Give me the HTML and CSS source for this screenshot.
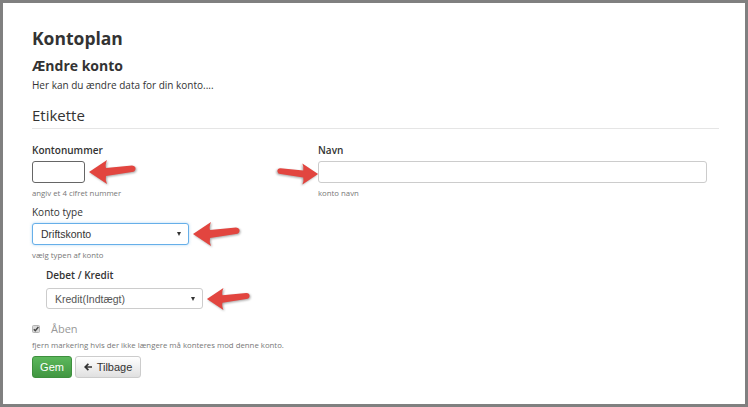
FILE: index.html
```html
<!DOCTYPE html>
<html lang="da">
<head>
<meta charset="utf-8">
<title>Kontoplan</title>
<link rel="stylesheet" href="styles.css">
</head>
<body>
<div class="frame">
  <div class="content">
    <h1 class="title">Kontoplan</h1>
    <h2 class="subtitle">Ændre konto</h2>
    <p class="lead">Her kan du ændre data for din konto....</p>
    <div class="legend">Etikette</div>

    <div class="row">
      <div class="col">
        <div class="label bold">Kontonummer</div>
        <div class="ctl">
          <input class="input input-num" type="text">
          <svg class="arrow arrow-after" viewBox="0 0 48 28" width="48" height="28"><path d="M1 14 L19 2 Q17 7 18 10 L44 7.5 Q48 8 47.5 11 Q47 14 44 14 L18 18 Q17 22 19 26 Z"/></svg>
        </div>
        <div class="help">angiv et 4 cifret nummer</div>

        <div class="label regular">Konto type</div>
        <div class="ctl">
          <div class="select focus"><span>Driftskonto</span><span class="caret"></span></div>
          <svg class="arrow arrow-after" viewBox="0 0 48 28" width="48" height="28"><path d="M1 14 L19 2 Q17 7 18 10 L44 7.5 Q48 8 47.5 11 Q47 14 44 14 L18 18 Q17 22 19 26 Z"/></svg>
        </div>
        <div class="help">vælg typen af konto</div>

        <div class="sub">
          <div class="label bold">Debet / Kredit</div>
          <div class="ctl">
            <div class="select select-sm"><span>Kredit(Indtægt)</span><span class="caret"></span></div>
            <svg class="arrow arrow-after arrow-short" viewBox="0 0 48 28" width="44" height="28"><path d="M1 14 L19 2 Q17 7 18 10 L44 7.5 Q48 8 47.5 11 Q47 14 44 14 L18 18 Q17 22 19 26 Z"/></svg>
          </div>
        </div>
      </div>

      <div class="col">
        <div class="label bold">Navn</div>
        <div class="ctl">
          <svg class="arrow arrow-before" viewBox="0 0 48 28" width="42" height="28"><path d="M1 14 L19 2 Q17 7 18 10 L44 7.5 Q48 8 47.5 11 Q47 14 44 14 L18 18 Q17 22 19 26 Z"/></svg>
          <input class="input input-wide" type="text">
        </div>
        <div class="help">konto navn</div>
      </div>
    </div>

    <div class="check">
      <svg class="checkbox" viewBox="0 0 8 8" width="8" height="8"><rect x="0.5" y="0.5" width="7" height="7" rx="1" fill="#d9d9d9" stroke="#b3b3b3"/><path d="M1.8 4.2 L3.3 5.8 L6.4 2" fill="none" stroke="#444" stroke-width="1.4"/></svg>
      <span class="check-text">Åben</span>
    </div>
    <div class="help help-tight">fjern markering hvis der ikke længere må konteres mod denne konto.</div>

    <div class="buttons">
      <button class="btn btn-success" type="button">Gem</button>
      <button class="btn btn-default" type="button"><svg class="btn-icon" viewBox="0 0 8 8" width="8" height="8"><path d="M0 4 L3.8 0.2 L5 1.4 L3.2 3.2 H8 V4.8 H3.2 L5 6.6 L3.8 7.8 Z"/></svg>Tilbage</button>
    </div>
  </div>
</div>
</body>
</html>
```

FILE: styles.css
```css
* { box-sizing: border-box; }

html, body {
  margin: 0;
  padding: 0;
  background: #808080;
}

.frame {
  width: 748px;
  height: 407px;
  border: 3px solid #808080;
  background: #fff;
  font-family: "Open Sans", "Liberation Sans", sans-serif;
  color: #333;
}

.content {
  margin-left: 29px;
  width: 687px;
  padding-top: 24px;
}

.title {
  margin: 0;
  font-size: 17.5px;
  line-height: 22px;
  font-weight: 700;
}

.subtitle {
  margin: 8px 0 0;
  font-size: 14px;
  line-height: 18px;
  font-weight: 700;
}

.lead {
  margin: 3px 0 0;
  font-size: 10px;
  line-height: 14px;
}

.legend {
  margin-top: 13px;
  font-size: 15px;
  line-height: 20px;
  padding-bottom: 3px;
  border-bottom: 1px solid #e5e5e5;
}

.row {
  margin-top: 14px;
  display: grid;
  grid-template-columns: 286px 389px;
}

.label {
  font-size: 10px;
  line-height: 14px;
}
.label.bold { font-weight: 600; }
.label.regular { font-size: 10px; margin-top: 7px; }

.ctl {
  position: relative;
  width: fit-content;
  margin-top: 4px;
}

.input {
  display: block;
  height: 22px;
  margin: 0;
  padding: 0 6px;
  border: 1px solid #ccc;
  border-radius: 3px;
  background: #fff;
  font-family: "Liberation Sans", Arial, sans-serif;
  font-size: 11px;
  outline: none;
}
.input-num {
  width: 53px;
  border-color: #666;
}
.input-wide {
  width: 389px;
}

.help {
  margin-top: 5px;
  font-size: 7.8px;
  line-height: 10px;
  color: #777;
}

.select {
  width: 157px;
  height: 22px;
  padding: 0 7px 0 8px;
  border: 1px solid #ccc;
  border-radius: 3px;
  background: #fff;
  display: flex;
  align-items: center;
  justify-content: space-between;
  font-family: "Liberation Sans", Arial, sans-serif;
  font-size: 10.5px;
  color: #555;
}
.select.focus {
  border-color: #66afe9;
  box-shadow: 0 0 3px rgba(102, 175, 233, 0.5);
  color: #333;
}
.select-sm { height: 21px; }

.caret {
  width: 0;
  height: 0;
  border-left: 2.5px solid transparent;
  border-right: 2.5px solid transparent;
  border-top: 4px solid #333;
}

.sub {
  padding-left: 14px;
}
.sub .label { margin-top: 8px; }
.sub .ctl { margin-top: 6px; }

.arrow {
  position: absolute;
  top: -3px;
  fill: #e2453f;
  filter: drop-shadow(1px 1px 1px rgba(0, 0, 0, 0.35));
}
.arrow-after {
  left: calc(100% + 3px);
}
.arrow-before {
  right: calc(100% - 1px);
  top: -1px;
  transform: scaleX(-1);
}

.check {
  margin-top: 13px;
  display: flex;
  align-items: center;
  gap: 11px;
  height: 14px;
}
.checkbox { flex: none; }
.check-text {
  font-size: 11px;
  line-height: 14px;
  color: #999;
}

.help-tight { margin-top: 4px; }

.buttons {
  margin-top: 6px;
  display: flex;
  gap: 3px;
}

.btn {
  height: 22px;
  margin: 0;
  padding: 0;
  border-radius: 3px;
  font-family: "Liberation Sans", Arial, sans-serif;
  font-size: 11px;
  display: flex;
  align-items: center;
  justify-content: center;
}
.btn-success {
  width: 40px;
  color: #fff;
  border: 1px solid #3e8f3e;
  background: linear-gradient(#5cb85c, #419641);
}
.btn-default {
  width: 66px;
  color: #333;
  border: 1px solid #ccc;
  background: linear-gradient(#fff, #e0e0e0);
  gap: 5px;
}
.btn-icon { fill: #333; }
```
